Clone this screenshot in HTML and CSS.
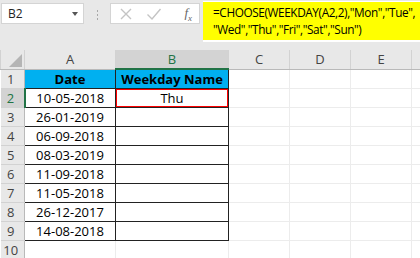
FILE: index.html
```html
<!DOCTYPE html>
<html lang="en">
<head>
  <meta charset="UTF-8" />
  <title>CHOOSE WEEKDAY</title>
  <link rel="stylesheet" href="styles.css">
</head>
<body>

  <!-- Formula bar -->
  <div class="toolbar">
    <div class="namebox">
      <span>B2</span>
      <span class="caret"></span>
    </div>
    <div class="grip"><i></i><i></i><i></i></div>
    <div class="buttons">
      <svg class="btn" width="14" height="14" viewBox="0 0 14 14"><path d="M2 2 L12 12 M12 2 L2 12" stroke="#c4c4c4" stroke-width="1.4" fill="none"/></svg>
      <svg class="btn" width="16" height="14" viewBox="0 0 16 14"><path d="M1.5 7.5 L6 12 L14.5 2" stroke="#c4c4c4" stroke-width="1.4" fill="none"/></svg>
      <span class="fx">f<sub>x</sub></span>
    </div>
    <div class="formula">
      <div class="hl">=CHOOSE(WEEKDAY(A2,2),"Mon","Tue",<br>"Wed","Thu","Fri","Sat","Sun")</div>
    </div>
  </div>

  <!-- Sheet -->
  <table class="sheet">
    <colgroup>
      <col class="c-row"><col class="c-a"><col class="c-b"><col class="c-x"><col class="c-x"><col class="c-x"><col class="c-f">
    </colgroup>
    <tr class="head">
      <th class="corner"><span class="tri"></span></th>
      <th>A</th><th class="on">B</th><th>C</th><th>D</th><th>E</th><th></th>
    </tr>
    <tr>
      <th class="num">1</th>
      <td class="box title">Date</td><td class="box title">Weekday Name</td>
      <td></td><td></td><td></td><td></td>
    </tr>
    <tr>
      <th class="num on">2</th>
      <td class="box">10-05-2018</td><td class="box sel">Thu</td>
      <td></td><td></td><td></td><td></td>
    </tr>
    <tr>
      <th class="num">3</th>
      <td class="box">26-01-2019</td><td class="box"></td>
      <td></td><td></td><td></td><td></td>
    </tr>
    <tr>
      <th class="num">4</th>
      <td class="box">06-09-2018</td><td class="box"></td>
      <td></td><td></td><td></td><td></td>
    </tr>
    <tr>
      <th class="num">5</th>
      <td class="box">08-03-2019</td><td class="box"></td>
      <td></td><td></td><td></td><td></td>
    </tr>
    <tr>
      <th class="num">6</th>
      <td class="box">11-09-2018</td><td class="box"></td>
      <td></td><td></td><td></td><td></td>
    </tr>
    <tr>
      <th class="num">7</th>
      <td class="box">11-05-2018</td><td class="box"></td>
      <td></td><td></td><td></td><td></td>
    </tr>
    <tr>
      <th class="num">8</th>
      <td class="box">26-12-2017</td><td class="box"></td>
      <td></td><td></td><td></td><td></td>
    </tr>
    <tr>
      <th class="num">9</th>
      <td class="box">14-08-2018</td><td class="box"></td>
      <td></td><td></td><td></td><td></td>
    </tr>
    <tr>
      <th class="num">10</th>
      <td></td><td></td><td></td><td></td><td></td><td></td>
    </tr>
  </table>

</body>
</html>
```

FILE: styles.css
```css
body {
  margin: 0;
  width: 420px;
  height: 258px;
  overflow: hidden;
  background: #fff;
  font-family: "Open Sans", sans-serif;
  color: #000;
}

/* ----- formula bar ----- */
.toolbar {
  height: 50px;
  background: #e8e8e8;
  display: flex;
  align-items: flex-start;
  box-sizing: border-box;
  padding-top: 1px;
}
.toolbar > * {
  flex-shrink: 0;
}
.namebox {
  margin: 2px 0 0 1px;
  width: 83px;
  height: 21px;
  box-sizing: border-box;
  background: #fff;
  border: 1px solid #d4d4d4;
  display: flex;
  align-items: center;
  justify-content: space-between;
  padding: 0 5px 0 6px;
  font-size: 12px;
  color: #222;
}
.caret {
  width: 0;
  height: 0;
  border-left: 3.5px solid transparent;
  border-right: 3.5px solid transparent;
  border-top: 4px solid #555;
}
.grip {
  width: 26px;
  display: flex;
  flex-direction: column;
  align-items: center;
  gap: 2px;
  margin-top: 9px;
}
.grip i {
  width: 1px;
  height: 2px;
  background: #a8a8a8;
}
.buttons {
  margin-top: 2px;
  width: 90px;
  height: 21px;
  box-sizing: border-box;
  background: #fff;
  border: 1px solid #d4d4d4;
  display: flex;
  align-items: center;
  padding: 0 7px 0 8px;
  gap: 13px;
}
.fx {
  margin-left: auto;
  font-family: "Liberation Serif", serif;
  font-style: italic;
  font-size: 13px;
  color: #666;
}
.fx sub {
  font-size: 9px;
}
.formula {
  flex: 1 1 auto;
  min-width: 0;
  margin-left: 3px;
  height: 41px;
  background: #fff;
  padding: 1px 0 2px 0;
  box-sizing: border-box;
  overflow: hidden;
}
.hl {
  height: 100%;
  background: #ffff00;
  padding: 2px 0 0 10px;
  font-size: 11.8px;
  letter-spacing: -0.4px;
  line-height: 17px;
  box-sizing: border-box;
  white-space: nowrap;
}

/* ----- sheet ----- */
.sheet {
  border-collapse: collapse;
  table-layout: fixed;
  width: 420px;
  font-size: 13px;
}
.c-row { width: 24px; }
.c-a { width: 91px; }
.c-b { width: 113px; }
.c-x { width: 61px; }
.c-f { width: 9px; }

.sheet th, .sheet td {
  height: 18px;
  padding: 0;
  text-align: center;
  border: 1px solid #ececec;
  white-space: nowrap;
  overflow: hidden;
}
.sheet tr.head th {
  height: 17px;
  background: #e8e8e8;
  color: #444;
  font-weight: normal;
  border-color: #d2d2d2;
  border-top: none;
  border-bottom-color: #b9b9b9;
}
.sheet tr.head th.on {
  background: #d3d3d3;
  color: #217346;
  border-bottom: 2px solid #217346;
}
.corner {
  position: relative;
}
.tri {
  position: absolute;
  right: 2px;
  bottom: 2px;
  width: 0;
  height: 0;
  border-left: 13px solid transparent;
  border-bottom: 13px solid #b5b5b5;
}
.sheet th.num {
  background: #e8e8e8;
  color: #444;
  font-weight: normal;
  border-color: #d2d2d2;
  border-left: none;
  border-right-color: #b9b9b9;
  padding-right: 3px;
}
.sheet th.num.on {
  background: #d3d3d3;
  color: #217346;
  border-right: 2px solid #217346;
}
.sheet td.box {
  border: 1px solid #222;
}
.sheet td.title {
  background: #00b0f0;
  font-weight: bold;
}
.sheet td.sel {
  position: relative;
}
.sheet td.sel::after {
  content: "";
  position: absolute;
  left: -1px;
  top: -1px;
  right: -1px;
  bottom: -1px;
  border: 2px solid #ff0000;
}
```
